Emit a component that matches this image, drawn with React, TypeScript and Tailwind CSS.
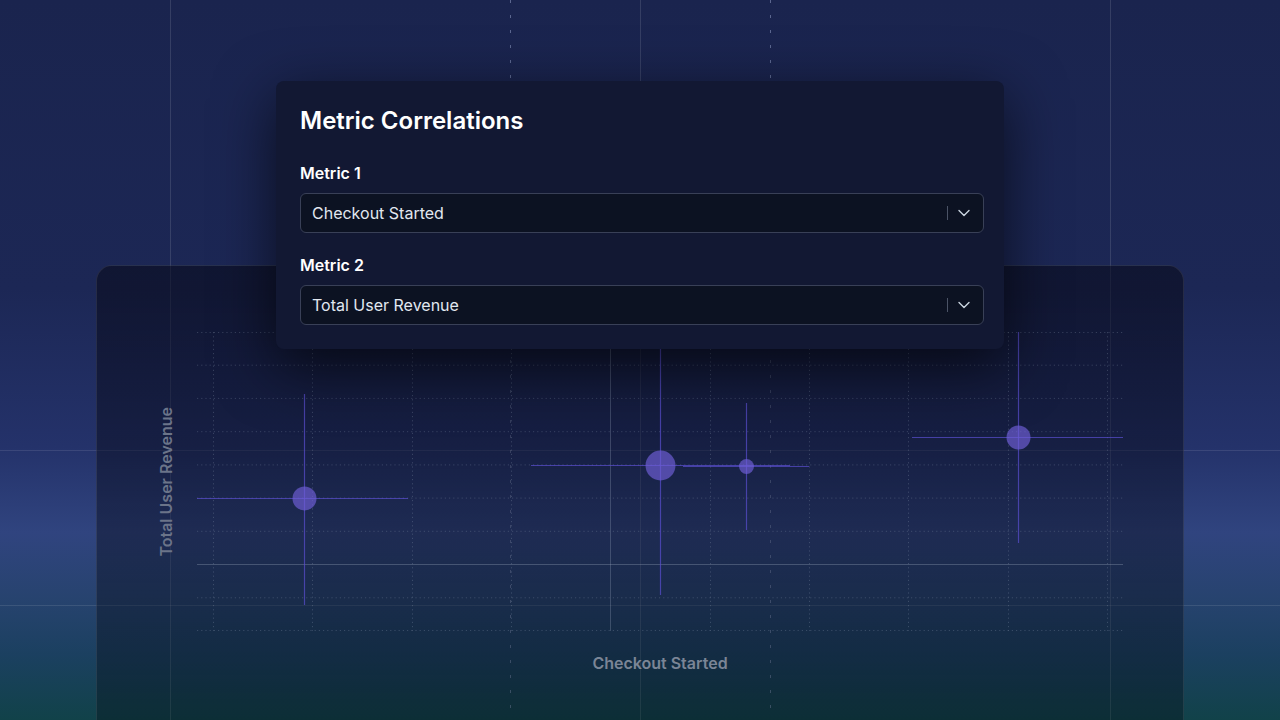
import React from "react";

const Chevron = () => (
  <svg width="12" height="8" viewBox="0 0 12 8" fill="none">
    <path d="M1 1.5 L6 6.5 L11 1.5" stroke="#cbd5e1" strokeWidth="1.4" strokeLinecap="round" strokeLinejoin="round" />
  </svg>
);

function Select({ value }: { value: string }) {
  return (
    <div className="flex h-[40px] items-center rounded-md border border-[#394057] bg-[#0c1222] pl-[11px] pr-[13px]">
      <span className="flex-1 text-[16px] text-[#e2e8f0]">{value}</span>
      <span className="h-[14px] w-px bg-[#4b5366]" />
      <span className="ml-[10px] flex w-[12px] items-center justify-center">
        <Chevron />
      </span>
    </div>
  );
}

const hY = [0.5, 33.2, 66.4, 99.7, 132.9, 166.1, 199.3, 265.8, 298.5];
const vX = [16, 115, 215, 314, 513, 612, 711, 811, 910];

const points = [
  { cx: 107, cy: 166, r: 12, h: [0, 211], v: [62, 273] },
  { cx: 463, cy: 133, r: 15, h: [334, 593], v: [0, 263] },
  { cx: 549, cy: 134, r: 7.5, h: [486, 612], v: [71, 198] },
  { cx: 821, cy: 105, r: 12, h: [715, 926], v: [0, 211] },
];

function Chart() {
  return (
    <svg width="926" height="299" viewBox="0 0 926 299" className="block">
      {hY.map((y) => (
        <line key={"h" + y} x1="0" x2="926" y1={y} y2={y} stroke="rgba(148,163,184,0.28)" strokeWidth="1" strokeDasharray="1.2 3" />
      ))}
      {vX.map((x) => (
        <line key={"v" + x} x1={x + 0.5} x2={x + 0.5} y1="0" y2="299" stroke="rgba(148,163,184,0.28)" strokeWidth="1" strokeDasharray="1.2 3" />
      ))}
      <line x1="0" x2="926" y1="232.5" y2="232.5" stroke="rgba(148,163,184,0.35)" strokeWidth="1" />
      <line x1="413.5" x2="413.5" y1="0" y2="299" stroke="rgba(148,163,184,0.3)" strokeWidth="1" />
      {points.map((p, i) => (
        <g key={i}>
          <line x1={p.h[0]} x2={p.h[1]} y1={p.cy + 0.5} y2={p.cy + 0.5} stroke="#5a4fd0" strokeOpacity="0.7" strokeWidth="1.2" />
          <line x1={p.cx + 0.5} x2={p.cx + 0.5} y1={p.v[0]} y2={p.v[1]} stroke="#5a4fd0" strokeOpacity="0.7" strokeWidth="1.2" />
          <circle cx={p.cx + 0.5} cy={p.cy + 0.5} r={p.r} fill="#6f5fd6" fillOpacity="0.68" />
        </g>
      ))}
    </svg>
  );
}

export default function App() {
  return (
    <div
      className="relative h-[720px] w-[1280px] overflow-hidden bg-[linear-gradient(180deg,#1a244e_0%,#1c2755_40%,#24326a_62%,#30447f_74%,#27436f_83%,#1b4060_91%,#114249_100%)]"
      style={{ fontFamily: "Inter, 'Noto Sans', sans-serif" }}
    >
      {/* background canvas lines */}
      <svg className="pointer-events-none absolute inset-0" width="1280" height="720">
        <line x1="170.5" x2="170.5" y1="0" y2="720" stroke="rgba(255,255,255,0.12)" />
        <line x1="640.5" x2="640.5" y1="0" y2="720" stroke="rgba(255,255,255,0.12)" />
        <line x1="1110.5" x2="1110.5" y1="0" y2="720" stroke="rgba(255,255,255,0.12)" />
        <line x1="510.5" x2="510.5" y1="0" y2="720" stroke="rgba(170,185,225,0.45)" strokeDasharray="3 12" />
        <line x1="770.5" x2="770.5" y1="0" y2="720" stroke="rgba(170,185,225,0.45)" strokeDasharray="3 12" />
        <line x1="0" x2="1280" y1="450.5" y2="450.5" stroke="rgba(255,255,255,0.1)" />
        <line x1="0" x2="1280" y1="605.5" y2="605.5" stroke="rgba(255,255,255,0.1)" />
      </svg>

      <div className="relative pl-[96px] pt-[265px]">
        <div className="h-[480px] w-[1088px] rounded-2xl border border-[rgba(255,255,255,0.09)] bg-[linear-gradient(180deg,rgba(10,12,30,0.62)_0%,rgba(8,12,28,0.45)_50%,rgba(5,12,20,0.35)_100%)]">
          <div className="flex items-center pl-[57px] pt-[66px]">
            <div className="flex w-[24px] justify-center">
              <span className="rotate-180 text-[16px] font-semibold whitespace-nowrap text-[#6b7489] [writing-mode:vertical-rl]">
                Total User Revenue
              </span>
            </div>
            <div className="ml-[19px]">
              <Chart />
            </div>
          </div>
          <div className="ml-[100px] mt-[20px] w-[926px] text-center text-[16px] leading-6 font-semibold text-[#7b8596]">
            Checkout Started
          </div>
        </div>
      </div>

      {/* dialog overlay */}
      <div className="absolute left-[276px] top-[81px] w-[728px] rounded-lg bg-[#121833] pb-6 pl-6 pr-5 pt-6 shadow-[0_16px_60px_rgba(0,0,0,0.65)]">
        <h2 className="text-[24px] leading-8 font-semibold text-white">Metric Correlations</h2>
        <div className="mt-6 text-[16px] leading-6 font-semibold text-white">Metric 1</div>
        <div className="mt-2">
          <Select value="Checkout Started" />
        </div>
        <div className="mt-5 text-[16px] leading-6 font-semibold text-white">Metric 2</div>
        <div className="mt-2">
          <Select value="Total User Revenue" />
        </div>
      </div>
    </div>
  );
}
